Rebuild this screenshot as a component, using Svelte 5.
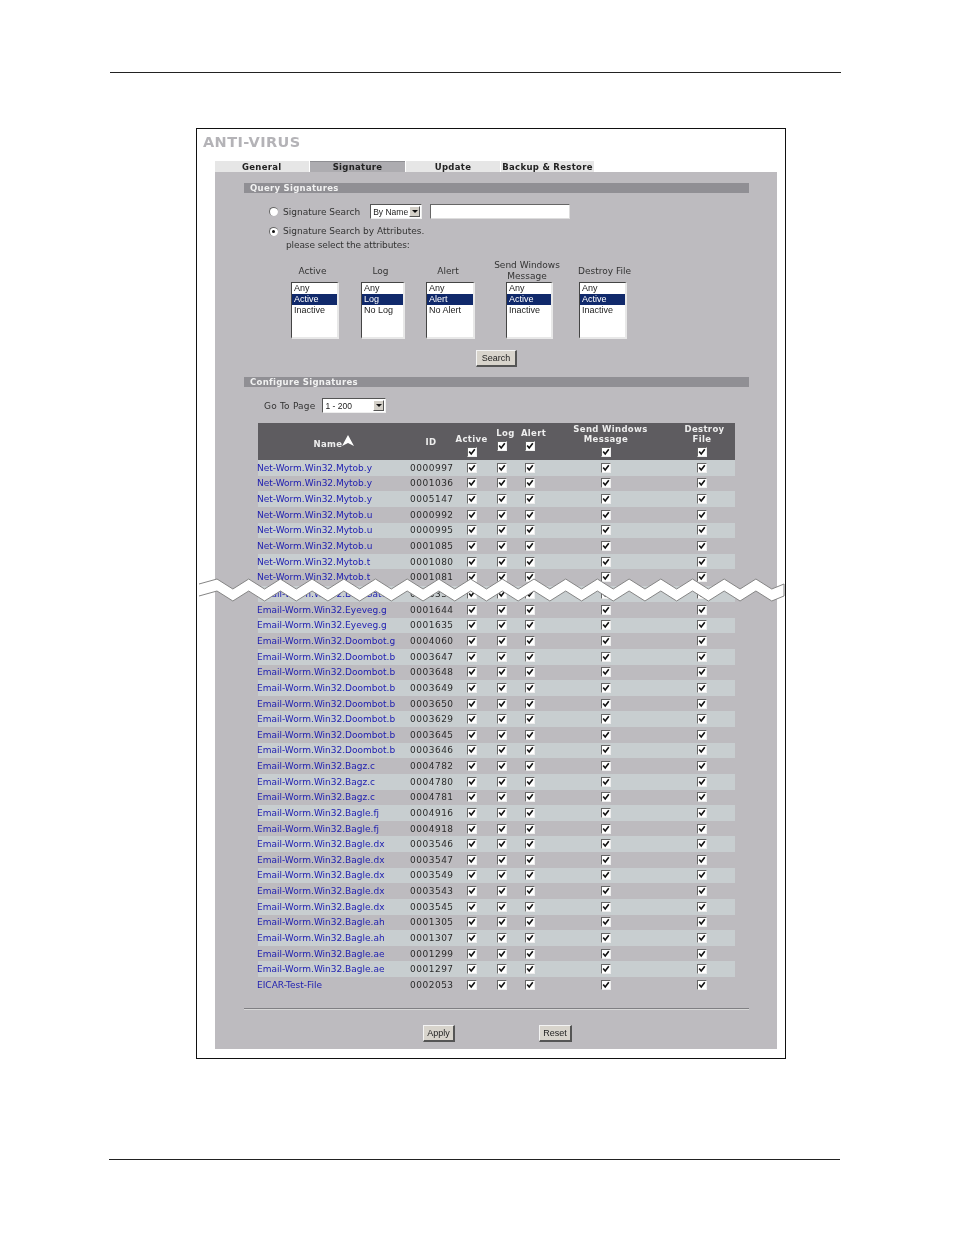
<script>
  const filters = [
    { label: ['Active'], w: 48, gap: 0, opts: ['Any', 'Active', 'Inactive'] },
    { label: ['Log'], w: 44, gap: 22, opts: ['Any', 'Log', 'No Log'] },
    { label: ['Alert'], w: 49, gap: 21, opts: ['Any', 'Alert', 'No Alert'] },
    { label: ['Send Windows', 'Message'], w: 47, gap: 31, opts: ['Any', 'Active', 'Inactive'] },
    { label: ['Destroy File'], w: 48, gap: 26, opts: ['Any', 'Active', 'Inactive'] }
  ];

  const NW = 'Net-Worm.Win32.Mytob.';
  const EW = 'Email-Worm.Win32.';

  const topRows = [
    [NW + 'y', '0000997'], [NW + 'y', '0001036'], [NW + 'y', '0005147'],
    [NW + 'u', '0000992'], [NW + 'u', '0000995'], [NW + 'u', '0001085'],
    [NW + 't', '0001080'], [NW + 't', '0001081']
  ];

  const bottomRows = [
    [EW + 'Delf.Gate.d', '0003339'],
    [EW + 'Eyeveg.g', '0001644'], [EW + 'Eyeveg.g', '0001635'],
    [EW + 'Doombot.g', '0004060'],
    [EW + 'Doombot.b', '0003647'], [EW + 'Doombot.b', '0003648'], [EW + 'Doombot.b', '0003649'],
    [EW + 'Doombot.b', '0003650'], [EW + 'Doombot.b', '0003629'], [EW + 'Doombot.b', '0003645'],
    [EW + 'Doombot.b', '0003646'],
    [EW + 'Bagz.c', '0004782'], [EW + 'Bagz.c', '0004780'], [EW + 'Bagz.c', '0004781'],
    [EW + 'Bagle.fj', '0004916'], [EW + 'Bagle.fj', '0004918'],
    [EW + 'Bagle.dx', '0003546'], [EW + 'Bagle.dx', '0003547'], [EW + 'Bagle.dx', '0003549'],
    [EW + 'Bagle.dx', '0003543'], [EW + 'Bagle.dx', '0003545'],
    [EW + 'Bagle.ah', '0001305'], [EW + 'Bagle.ah', '0001307'],
    [EW + 'Bagle.ae', '0001299'], [EW + 'Bagle.ae', '0001297'],
    ['EICAR-Test-File', '0002053']
  ];

  // torn-page band, in svg coords (svg sits at x 0, y 445 of the frame)
  function tear() {
    const top = [[2, 10]];
    for (let i = 0; i < 19; i++) {
      const x = 20 + i * 31.7;
      if (x < 587) top.push([x, 5]);
      if (x + 15.85 < 587) top.push([x + 15.85, 15]);
    }
    top.push([587, 10]);
    const bottom = top.map(([x, y]) => [x, y + 12]).reverse();
    return { top, bottom };
  }
  const band = tear();
  const str = (pts) => pts.map((p) => p.join(',')).join(' ');
</script>

{#snippet cb()}
  <span class="cb">
    <svg viewBox="0 0 10 10" width="8" height="8"><path d="M1.5 4.5 L4 7.5 L8.5 1.5" fill="none" stroke="#111" stroke-width="2" /></svg>
  </span>
{/snippet}

{#snippet row(r, i)}
  <div class="row" class:light={i % 2 === 0}>
    <a class="name" href="#top">{r[0]}</a>
    <span class="id">{r[1]}</span>
    <span class="c">{@render cb()}</span>
    <span class="c">{@render cb()}</span>
    <span class="c">{@render cb()}</span>
    <span class="c">{@render cb()}</span>
    <span class="c">{@render cb()}</span>
  </div>
{/snippet}

<div class="page">
  <div class="rule top-rule"></div>

  <div class="frame">
    <div class="title">ANTI-VIRUS</div>

    <div class="tabs">
      <div class="tab">General</div>
      <div class="tab on">Signature</div>
      <div class="tab">Update</div>
      <div class="tab last">Backup &amp; Restore</div>
    </div>

    <div class="panel">
      <div class="bar first">Query Signatures</div>

      <div class="search-row">
        <span class="radio"></span>
        <span class="lbl">Signature Search</span>
        <span class="drop by-name"><span>By Name</span><i class="arrow"></i></span>
        <input class="text" type="text" />
      </div>
      <div class="line attrs">
        <span class="radio sel"></span>
        <span class="lbl">Signature Search by Attributes.</span>
      </div>
      <div class="line hint">please select the attributes:</div>

      <div class="filters">
        {#each filters as f}
          <div class="filter" style="width:{f.w}px;margin-left:{f.gap}px">
            <div class="f-label">
              {#each f.label as l}<div>{l}</div>{/each}
            </div>
            <div class="list">
              {#each f.opts as o, i}
                <div class="opt" class:sel={i === 1}>{o}</div>
              {/each}
            </div>
          </div>
        {/each}
      </div>

      <div class="search-btn"><button class="btn">Search</button></div>

      <div class="bar conf">Configure Signatures</div>

      <div class="goto">
        <span class="lbl">Go To Page</span>
        <span class="drop pages"><span>1 - 200</span><i class="arrow"></i></span>
      </div>

      <div class="table">
        <div class="head">
          <div class="h-name">
            <span>Name</span>
            <svg viewBox="0 0 12 11" width="12" height="11"><path d="M6 0 L12 11 L6 8 L0 11 Z" fill="#fff" /></svg>
          </div>
          <div class="h-id">ID</div>
          <div class="h-col"><div>Active</div>{@render cb()}</div>
          <div class="h-col up"><div>Log</div>{@render cb()}</div>
          <div class="h-col up"><div>Alert</div>{@render cb()}</div>
          <div class="h-col"><div><span class="lead wide">Send Windows</span><br />Message</div>{@render cb()}</div>
          <div class="h-col"><div><span class="lead">Destroy</span><br />File</div>{@render cb()}</div>
        </div>

        <div class="top-rows">
          {#each topRows as r, i}{@render row(r, i)}{/each}
        </div>
        <div class="bottom-rows">
          {#each bottomRows as r, i}{@render row(r, i)}{/each}
        </div>
      </div>

      <div class="sep"></div>

      <div class="actions">
        <button class="btn apply">Apply</button>
        <button class="btn reset">Reset</button>
      </div>
    </div>

    <svg class="tear" width="590" height="40" viewBox="0 0 590 40">
      <polygon points={str([...band.top, ...band.bottom])} fill="#fff" />
      <polyline points={str(band.top)} fill="none" stroke="#858585" stroke-width="1" />
      <polyline points={str(band.bottom)} fill="none" stroke="#858585" stroke-width="1" />
      <line x1="587" y1="10" x2="587" y2="22" stroke="#858585" />
    </svg>
  </div>

  <div class="rule bottom-rule"></div>
</div>

<style>
  :global(body) {
    margin: 0;
    background: #fff;
  }

  .page {
    width: 954px;
    height: 1235px;
    overflow: hidden;
    position: relative;
    font-family: "DejaVu Sans", sans-serif;
    font-size: 9px;
    color: #333;
  }

  .rule { height: 1px; background: #222; }
  .top-rule { margin: 72px 0 0 110px; width: 731px; }
  .bottom-rule { margin: 100px 0 0 109px; width: 731px; }

  .frame {
    position: relative;
    box-sizing: border-box;
    width: 590px;
    height: 931px;
    margin: 55px 0 0 196px;
    border: 1px solid #111;
    background: #fff;
    filter: blur(.3px);
  }

  .title {
    padding: 6px 0 0 6px;
    height: 26px;
    line-height: 14px;
    font-size: 14.5px;
    font-weight: 700;
    letter-spacing: .4px;
    color: #b4b3b7;
  }

  .tabs {
    display: flex;
    margin-left: 18px;
    height: 11px;
    width: 380px;
    gap: 1px;
  }
  .tab {
    flex: 0 0 94px;
    background: #e6e6e6;
    font-size: 8.5px;
    font-weight: 700;
    letter-spacing: .3px;
    line-height: 12px;
    text-align: center;
    color: #222;
  }
  .tab:first-child { text-align: left; padding-left: 27px; box-sizing: border-box; }
  .tab.on { flex-basis: 95px; background: #adacb0; border-top: 1px solid #8f8f93; box-sizing: border-box; line-height: 11px; }
  .tab.last { flex-basis: 93px; white-space: nowrap; }

  .panel {
    box-sizing: border-box;
    margin-left: 18px;
    width: 562px;
    height: 877px;
    background: #bdbbbf;
    padding-top: 11px;
    overflow: hidden;
  }

  .bar {
    box-sizing: border-box;
    margin-left: 29px;
    width: 505px;
    height: 10px;
    padding-left: 6px;
    background: #908f94;
    color: #f2f2f2;
    font-size: 8.5px;
    font-weight: 700;
    line-height: 10px;
    letter-spacing: .3px;
  }
  .conf { margin-top: 10px; }

  .search-row {
    display: flex;
    align-items: center;
    height: 15px;
    margin: 11px 0 0 54px;
  }
  .lbl { white-space: nowrap; }

  .radio {
    flex: none;
    width: 9px;
    height: 9px;
    margin-right: 5px;
    border-radius: 50%;
    background: #fff;
    border-top: 1px solid #666;
    border-left: 1px solid #666;
    box-sizing: border-box;
    position: relative;
  }
  .radio.sel::after {
    content: '';
    position: absolute;
    left: 2px;
    top: 2px;
    width: 3px;
    height: 3px;
    border-radius: 50%;
    background: #111;
  }

  .drop {
    box-sizing: border-box;
    display: flex;
    align-items: center;
    justify-content: space-between;
    height: 15px;
    padding: 0 1px 0 2px;
    background: #fff;
    border-style: solid;
    border-width: 1px;
    border-color: #555 #eee #eee #555;
    font-family: "Liberation Sans", sans-serif;
    font-size: 8.5px;
    white-space: nowrap;
    color: #222;
  }
  .by-name { width: 52px; margin-left: 10px; }
  .pages { width: 64px; margin-left: 7px; }
  .arrow {
    flex: none;
    box-sizing: border-box;
    position: relative;
    width: 11px;
    height: 11px;
    background: #d4d0c8;
    border: 1px solid;
    border-color: #fff #555 #555 #fff;
  }
  .arrow::after {
    content: '';
    position: absolute;
    left: 2px;
    top: 3px;
    border: 3px solid transparent;
    border-top: 3px solid #111;
    border-bottom: 0;
  }

  .text {
    box-sizing: border-box;
    width: 140px;
    height: 15px;
    margin: 0 0 0 8px;
    padding: 0;
    background: #fff;
    border-style: solid;
    border-width: 1px;
    border-color: #666 #ddd #ddd #666;
  }

  .line { height: 14px; line-height: 14px; white-space: nowrap; }
  .attrs { display: flex; align-items: center; margin: 5px 0 0 54px; }
  .hint { margin-left: 71px; letter-spacing: -.1px; }

  .filters { display: flex; margin: 8px 0 0 76px; }
  .filter { display: flex; flex-direction: column; align-items: center; }
  .f-label {
    height: 22px;
    padding-right: 5px;
    display: flex;
    flex-direction: column;
    justify-content: center;
    align-items: center;
    line-height: 11px;
    white-space: nowrap;
  }
  .filter:last-child .f-label { padding-right: 0; padding-left: 3px; }
  .list {
    box-sizing: border-box;
    width: 100%;
    height: 57px;
    background: #fff;
    border-style: solid;
    border-width: 1px 2px 2px 1px;
    border-color: #444 #e8e8e8 #e8e8e8 #444;
    font-family: "Liberation Sans", sans-serif;
    color: #222;
  }
  .opt { height: 11px; line-height: 11px; padding-left: 2px; white-space: nowrap; }
  .opt.sel { background: #10296b; color: #fff; }

  .btn {
    box-sizing: border-box;
    height: 17px;
    padding: 0;
    background: #d8d4cc;
    border-style: solid;
    border-width: 1px 2px 2px 1px;
    border-color: #f4f4f4 #555 #555 #f4f4f4;
    font-family: "Liberation Sans", sans-serif;
    font-size: 9px;
    color: #222;
  }
  .search-btn { margin: 11px 0 0 261px; height: 17px; display: flex; }
  .search-btn .btn { width: 41px; }

  .goto { display: flex; align-items: center; height: 15px; margin: 11px 0 0 49px; letter-spacing: .2px; }
  .goto .drop { letter-spacing: 0; }

  .table { margin: 10px 0 0 43px; width: 477px; }

  .head, .row {
    display: grid;
    grid-template-columns: 152px 46px 31px 30px 26px 126px 66px;
  }
  .head {
    height: 37px;
    background: #5e5c60;
    color: #eee;
    font-size: 8.5px;
    font-weight: 700;
    letter-spacing: .35px;
    line-height: 10px;
    text-align: center;
  }
  .h-name {
    display: flex;
    align-items: center;
    justify-content: center;
  }
  .h-name span { margin-top: 4px; }
  .h-name svg { margin-bottom: 3px; }
  .h-id { align-self: center; padding-right: 4px; }
  .h-col {
    display: flex;
    flex-direction: column;
    align-items: center;
    justify-content: flex-end;
    padding-bottom: 3px;
    white-space: nowrap;
    gap: 3px;
  }
  .h-col.up { padding-bottom: 9px; }
  .h-col.up > div { padding-left: 7px; }
  .lead { display: inline-block; padding-left: 5px; }
  .lead.wide { padding-left: 9px; }

  .bottom-rows { margin-top: 1.4px; }

  .row {
    height: 15.64px;
    align-items: center;
  }
  .row.light { background: #c8ced0; }
  .name {
    margin-left: -1px;
    color: #1c1cb0;
    text-decoration: none;
    white-space: nowrap;
  }
  .id { letter-spacing: .5px; color: #2b2b2b; }
  .c { display: flex; justify-content: center; }

  .cb {
    box-sizing: border-box;
    display: inline-flex;
    align-items: center;
    justify-content: center;
    width: 10px;
    height: 10px;
    background: #fff;
    border-style: solid;
    border-width: 1px;
    border-color: #666 #eee #eee #666;
  }

  .sep {
    margin: 15px 0 0 29px;
    width: 505px;
    height: 1px;
    background: #807f83;
    box-shadow: 0 1px 0 #d8d8d8;
  }

  .actions { display: flex; margin: 16px 0 0 208px; }
  .apply { width: 32px; }
  .reset { width: 33px; margin-left: 84px; }

  .tear { position: absolute; left: 0; top: 445px; }
</style>
